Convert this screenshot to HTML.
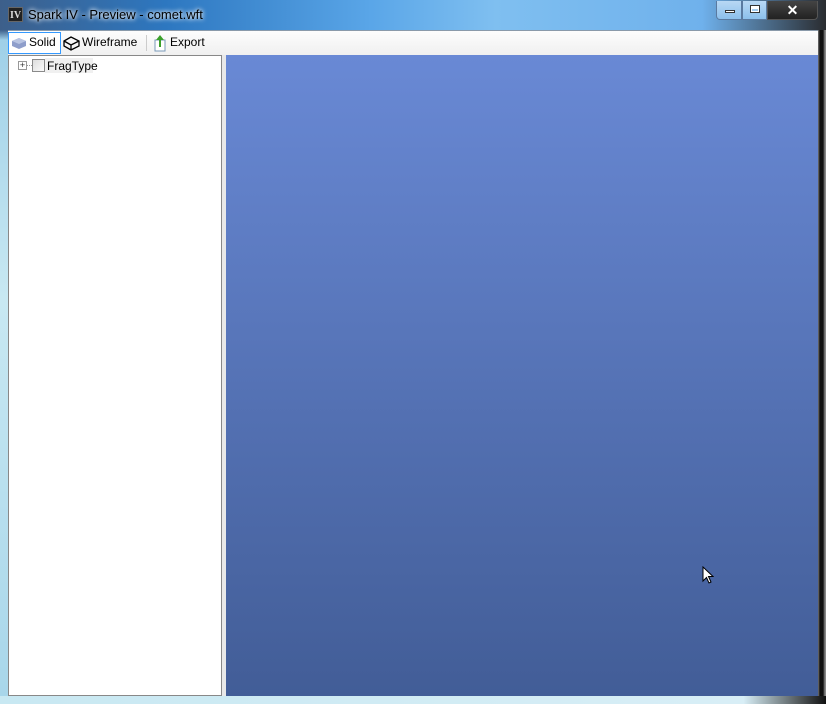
<!DOCTYPE html><html><head><style>
body{margin:0;width:826px;height:704px;overflow:hidden;position:relative;font-family:"Liberation Sans",sans-serif;font-size:12px;
background:linear-gradient(90deg,#3d5f8a 0,#2d77c0 20%,#5aa6e8 45%,#7fbff0 60%,#6fb1ec 85%,#2a2c30 100%);}
.frame{position:absolute;left:0;top:0;width:826px;height:704px;background:linear-gradient(180deg,transparent 0,transparent 30px,#9fd0e8 40px,#c8e8f2 300px,#a8d6ea 700px);}
.rf{position:absolute;left:818px;top:30px;width:8px;height:674px;background:linear-gradient(90deg,#777 0,#111 2px,#111 5px,#888 7px);}
.title{position:absolute;left:28px;top:7px;font-size:13px;color:#000;text-shadow:0 0 6px #fff,0 0 4px #fff;}
.logo{position:absolute;left:8px;top:7px;width:15px;height:15px;background:#222;color:#ddd;font:bold 10px "Liberation Serif",serif;text-align:center;line-height:15px;border:1px solid #666;box-sizing:border-box}
.btns{position:absolute;left:716px;top:1px;width:102px;height:19px;}
.b{position:absolute;top:0;height:19px;border:1px solid #5a7aa0;border-top:none;box-sizing:border-box;background:linear-gradient(#b8d8f4,#8cc0ec)}
.tb{position:absolute;left:8px;top:30px;width:810px;height:25px;background:linear-gradient(#fdfdfd,#f0f0f0);border-top:1px solid #8a9aaa;box-sizing:border-box}
.tree{position:absolute;left:8px;top:55px;width:214px;height:641px;background:#fff;border:1px solid #888;box-sizing:border-box}
.split{position:absolute;left:222px;top:55px;width:4px;height:641px;background:#e8e8e8}
.view{position:absolute;left:226px;top:55px;width:592px;height:641px;background:linear-gradient(#6989d5,#425d97);}
.bot{position:absolute;left:0;top:696px;width:826px;height:8px;background:linear-gradient(90deg,#c8e8f2,#d8eef6 90%,#111)}
.t{position:absolute;top:35px;font-size:12px;color:#000}
</style></head><body>
<div class="frame"></div><div class="rf"></div><div class="bot"></div>
<div class="logo">IV</div>
<div class="title">Spark IV - Preview - comet.wft</div>
<div class="btns">
<div class="b" style="left:0;width:26px;border-radius:0 0 0 4px"><div style="position:absolute;left:8px;top:9px;width:10px;height:3px;background:#fff;border:1px solid #333;box-sizing:border-box"></div></div>
<div class="b" style="left:26px;width:25px"><div style="position:absolute;left:7px;top:4px;width:10px;height:8px;border:1px solid #333;box-shadow:inset 0 0 0 1px #fff,inset 0 2px 0 1px #fff;box-sizing:border-box"></div></div>
<div class="b" style="left:51px;width:51px;background:linear-gradient(#444,#222);border-color:#555;border-radius:0 0 4px 0;color:#fff;font-weight:bold;font-size:14px;text-align:center;line-height:18px">✕</div>
</div>
<div class="tb">
<div style="position:absolute;left:0;top:1px;width:53px;height:22px;border:1px solid #3399ff;box-sizing:border-box;background:#fff"></div>
<svg style="position:absolute;left:3px;top:4px" width="16" height="16"><path d="M1 6L8 3L15 6L15 11L8 14L1 11Z" fill="#8e9ecb"/><path d="M1 6L8 9L15 6L8 3Z" fill="#b8c4e2"/></svg>
<svg style="position:absolute;left:55px;top:4px" width="17" height="16"><path d="M1 6L8 2L16 6L16 11L8 15L1 11Z M1 6L8 10L16 6 M8 10L8 15" fill="none" stroke="#000" stroke-width="1.3"/></svg>
<div style="position:absolute;left:138px;top:4px;width:1px;height:16px;background:#ccc"></div>
<svg style="position:absolute;left:145px;top:3px" width="14" height="18"><rect x="2" y="6" width="10" height="11" fill="#fff" stroke="#7a9ab8"/><path d="M7 1L3 6H6V13H8V6H11Z" fill="#3aa02a"/></svg>
</div>
<div class="t" style="left:29px">Solid</div>
<div class="t" style="left:82px">Wireframe</div>
<div class="t" style="left:170px">Export</div>
<div class="tree"></div>
<div style="position:absolute;left:18px;top:61px;width:9px;height:9px;border:1px solid #999;box-sizing:border-box;font-size:9px;line-height:6px;text-align:center;color:#333;background:#fff">+</div>
<div style="position:absolute;left:27px;top:65px;width:5px;border-top:1px dotted #999"></div>
<div style="position:absolute;left:32px;top:59px;width:13px;height:13px;border:1px solid #8a8a8a;box-sizing:border-box;background:linear-gradient(135deg,#ddd,#fafafa)"></div>
<div style="position:absolute;left:45px;top:58px;width:48px;height:15px;background:#f0f0f0"></div>
<div style="position:absolute;left:47px;top:59px;font-size:12px">FragType</div>
<div class="split"></div>
<div class="view"></div>
<svg style="position:absolute;left:702px;top:566px" width="12" height="19"><path d="M1 1L1 15L4.5 11.5L7 17L9 16L6.5 10.5L11 10.5Z" fill="#fff" stroke="#000"/></svg>
</body></html>
